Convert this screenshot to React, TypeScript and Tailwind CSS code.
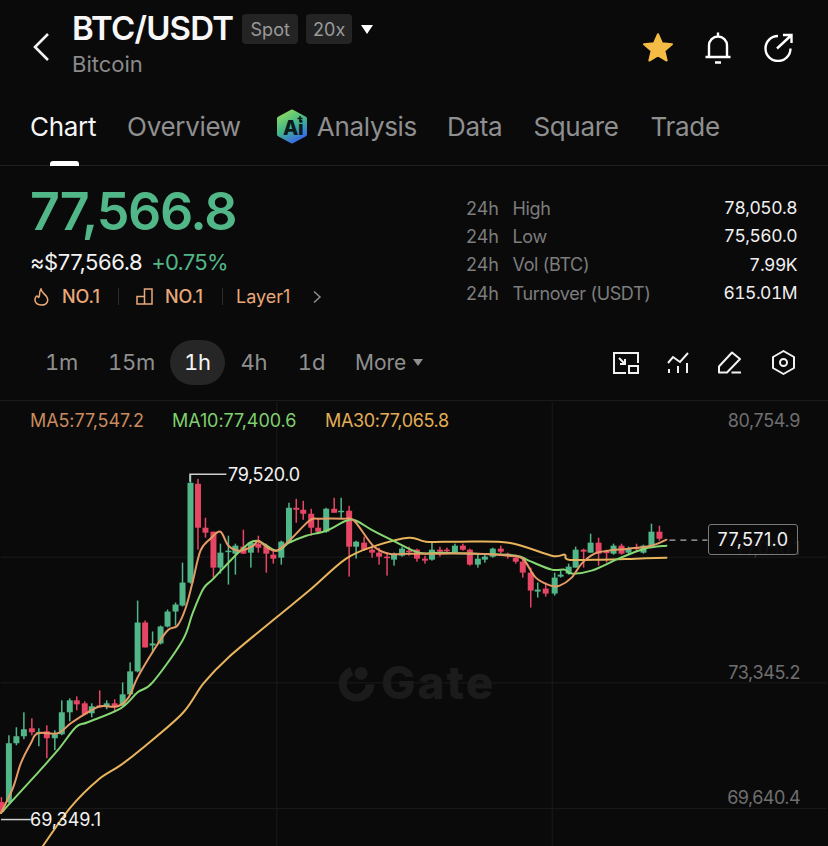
import type { ReactNode } from "react";

const GREEN = "#52b788";
const RED = "#e64563";

// [x, high, bodyTop, bodyBottom, low, isUp]
const CANDLES: [number, number, number, number, number, boolean][] = [
  [0.5, 797, 802, 812, 812, false],
  [8, 735, 743, 802, 803, true],
  [15.5, 727, 736, 743, 745, true],
  [23, 712, 729, 736, 739, true],
  [31, 718, 728, 732, 735, false],
  [38, 728, 732, 733.5, 746, true],
  [46, 725, 731, 738, 758, false],
  [54, 730, 734, 738, 750, true],
  [61, 700, 712, 734, 735, true],
  [69, 698, 700, 712, 721, true],
  [76, 696, 700, 704, 710, false],
  [84, 701, 703, 714, 715, false],
  [91, 703, 706, 713, 717, true],
  [99, 690, 705, 707, 707, false],
  [106, 700, 703, 706, 709, true],
  [114, 699, 703, 707, 712, false],
  [122, 682, 694, 705, 706, true],
  [129.5, 662, 671, 694, 695, true],
  [137, 600, 622, 671, 672, true],
  [144.5, 620, 622, 647, 647, false],
  [152, 631, 643, 645, 652, true],
  [160, 625, 626, 643, 644, true],
  [167, 609, 611, 626, 627, true],
  [175, 602, 604, 611, 625, true],
  [182, 562, 582, 605, 606, true],
  [190, 474, 482, 582, 583, true],
  [197.5, 478, 483, 527, 549, false],
  [205, 517, 527, 532, 537, false],
  [213, 531, 531, 567, 578, false],
  [220, 543, 552, 567, 573, true],
  [228, 535, 550, 551.5, 584, true],
  [235, 543, 545, 553, 574, true],
  [243, 529, 546, 553, 553, false],
  [250.5, 541, 542, 552, 567, true],
  [258, 535, 543, 547, 552, false],
  [266, 543, 546, 553, 572, false],
  [273, 550, 554, 558, 563, false],
  [281, 540, 541, 557, 564, true],
  [288.7, 502, 507, 542, 542, true],
  [296, 498, 507, 509, 522, false],
  [303, 500, 509, 513, 519, false],
  [311, 508, 513, 527, 535, false],
  [318, 517, 527, 531, 532, false],
  [326, 507, 508, 531, 532, true],
  [334, 497, 508, 512, 512, false],
  [341, 497, 510, 511, 518, true],
  [349, 505, 510, 546, 576, false],
  [356, 540, 541, 546, 558, true],
  [364, 536, 542, 549, 550, false],
  [372, 545, 549, 552, 557, false],
  [379, 547, 552, 556, 564, false],
  [387, 553, 556, 557.5, 575, false],
  [394, 552, 553, 559, 565, true],
  [402, 546, 548, 555, 556, true],
  [409, 546, 550, 551.5, 555, false],
  [417, 548, 549, 558, 561, false],
  [425, 555, 558, 560, 563, false],
  [432, 541, 549, 559, 560, true],
  [440, 546, 549, 551, 556, false],
  [447, 547, 549, 550.5, 553, false],
  [455, 543, 545, 552, 553, true],
  [463, 543, 545, 549, 550, false],
  [470, 548, 549, 564, 565, false],
  [478, 553, 558, 564, 567, true],
  [485, 554, 556, 559, 562, true],
  [493, 547, 548, 556, 557, true],
  [501, 545, 548, 551, 553, false],
  [508, 552, 553, 555, 558, false],
  [516, 554, 557, 561, 563, false],
  [523, 558, 561, 572, 577, false],
  [531, 567, 572, 590, 607, false],
  [538, 582, 589, 591, 597, true],
  [546, 582, 588, 593, 596, false],
  [555, 572, 577, 593, 595, true],
  [561, 570, 574, 576, 577, true],
  [569, 563, 566, 573, 574, true],
  [576, 546, 549, 567, 567, true],
  [584, 548, 549, 551, 567, false],
  [591, 533, 542, 552, 552, true],
  [599, 537, 542, 553, 565, false],
  [607, 549, 551, 552.5, 562, false],
  [614, 543, 545, 553, 554, true],
  [622, 543, 545, 553, 554, false],
  [629, 546, 548, 552, 554, true],
  [637, 543, 547, 548.5, 551, false],
  [644, 544, 545, 552, 553, true],
  [652, 523, 531, 545, 546, true],
  [660, 525, 531, 538, 540, false],
];

const MA5: number[][] = [
  [0, 813], [12, 788], [20, 763], [30, 743], [37, 733], [57, 733], [70, 723], [87, 712], [100, 706],
  [117, 706], [128, 697], [137, 677], [153, 650], [167, 630], [177, 625], [185, 608], [192, 582],
  [200, 550], [210, 538], [220, 531], [228, 545], [240, 550], [253, 545], [258, 540], [267, 547],
  [276, 550], [288, 541], [309, 520], [319, 518], [343, 518], [354, 520], [373, 545], [389, 553],
  [409, 553], [442, 553], [476, 553], [509, 555], [523, 558], [536, 577], [551, 585], [560, 585],
  [572, 577], [582, 563], [595, 553], [609, 550], [629, 548], [652, 545], [667, 539],
];
const MA10: number[][] = [
  [0, 813], [33, 777], [57, 750], [75, 727], [87, 722], [120, 708], [137, 692], [152, 682], [182, 640],
  [192, 613], [203, 588], [213, 578], [240, 550], [256, 540], [276, 550], [289, 542], [306, 535],
  [326, 530], [346, 520], [356, 520], [373, 530], [393, 540], [419, 552], [443, 552], [476, 553],
  [516, 555], [529, 560], [552, 569], [565, 569], [572, 573], [592, 570], [619, 558], [645, 548], [667, 545],
];
const MA30: number[][] = [
  [42, 846], [70, 807], [97, 780], [120, 765], [143, 747], [182, 713], [203, 683], [228, 657], [276, 617],
  [309, 590], [346, 558], [376, 545], [409, 537], [426, 541], [459, 541], [509, 542], [552, 555],
  [565, 554], [569, 559], [602, 559], [636, 558], [667, 557],
];

// catmull-rom through the points so the averages don't look faceted
function smooth(pts: number[][]) {
  let d = `M${pts[0][0]} ${pts[0][1]}`;
  for (let i = 0; i < pts.length - 1; i++) {
    const p0 = pts[Math.max(i - 1, 0)];
    const p1 = pts[i];
    const p2 = pts[i + 1];
    const p3 = pts[Math.min(i + 2, pts.length - 1)];
    const c1x = p1[0] + (p2[0] - p0[0]) / 6;
    const c1y = p1[1] + (p2[1] - p0[1]) / 6;
    const c2x = p2[0] - (p3[0] - p1[0]) / 6;
    const c2y = p2[1] - (p3[1] - p1[1]) / 6;
    d += `C${c1x} ${c1y} ${c2x} ${c2y} ${p2[0]} ${p2[1]}`;
  }
  return d;
}

function Candles() {
  return (
    <>
      {CANDLES.map(([x, high, top, bottom, low, up]) => {
        const color = up ? GREEN : RED;
        return (
          <g key={x} fill={color}>
            <rect x={x - 0.75} y={high} width={1.5} height={low - high} />
            <rect x={x - 3} y={top} width={6} height={Math.max(bottom - top, 1.5)} />
          </g>
        );
      })}
    </>
  );
}

function Chart() {
  return (
    <svg viewBox="0 400 828 446" className="absolute inset-0 h-full w-full">
      <path d="M0 556.500H828M0 682.500H828M0 808.500H828M276.500 401V846M552.500 401V846" stroke="#1b1b1c" strokeWidth="1" />
      <g fill="#1b1b1c">
        <path d="M350 666.500A18 18 0 1 0 374.500 684H365.500A9.500 9.500 0 1 1 353 675Z" />
        <circle cx="361" cy="673" r="6.500" />
        <text x="381" y="699" fontSize="46" fontWeight="800" letterSpacing="2">
          Gate
        </text>
      </g>
      <Candles />
      <g fill="none" strokeWidth="2" strokeLinejoin="round" strokeLinecap="round">
        <path d={smooth(MA30)} stroke="#e8b45c" />
        <path d={smooth(MA10)} stroke="#86d873" />
        <path d={smooth(MA5)} stroke="#e49c66" />
      </g>
      <path d="M189.500 481V473.500H226" fill="none" stroke="#cfcfcf" strokeWidth="1.500" />
      <path d="M0 819.500H30" stroke="#cfcfcf" strokeWidth="1.500" />
      <path d="M670 539.500H708" stroke="#b0b0b0" strokeWidth="1.200" strokeDasharray="6 5" />
    </svg>
  );
}

function Tab({ children, active }: { children: ReactNode; active?: boolean }) {
  return <span className={active ? "text-[#f5f5f5]" : "text-[#8f8f8f]"}>{children}</span>;
}

function AiIcon() {
  return (
    <svg width="32" height="35" viewBox="0 0 32 35" className="mr-[9px]">
      <defs>
        <linearGradient id="ai" x1="0.1" y1="0" x2="0.6" y2="1">
          <stop offset="0" stopColor="#8fdc5e" />
          <stop offset="0.55" stopColor="#3fb58d" />
          <stop offset="1" stopColor="#3a6fe0" />
        </linearGradient>
      </defs>
      <path
        d="M16 2.500L29 9.500V25.500L16 32.500L3 25.500V9.500Z"
        fill="url(#ai)"
        stroke="url(#ai)"
        strokeWidth="4"
        strokeLinejoin="round"
      />
      <text x="7" y="26" fontSize="20" fontWeight="800" fill="#0d1a1c">
        Ai
      </text>
      <path d="M24 7V12M21.500 9.500H26.500" stroke="#0d1a1c" strokeWidth="1.500" />
    </svg>
  );
}

const STATS = [
  ["High", "78,050.8"],
  ["Low", "75,560.0"],
  ["Vol (BTC)", "7.99K"],
  ["Turnover (USDT)", "615.01M"],
];

const FRAMES = [
  { label: "1m", box: "w-[63px] text-[#8f8f8f]" },
  { label: "15m", box: "w-[77px] text-[#8f8f8f]" },
  { label: "1h", box: "w-[55px] rounded-full bg-[#262627] text-[#f5f5f5]" },
  { label: "4h", box: "w-[58px] text-[#8f8f8f]" },
  { label: "1d", box: "w-[57px] text-[#8f8f8f]" },
];

export default function App() {
  return (
    <div className="flex h-[846px] w-[828px] flex-col overflow-hidden bg-[#0a0a0b] font-['Inter',sans-serif] text-white">
      {/* header */}
      <div className="flex h-[88px] shrink-0">
        <svg width="18" height="30" viewBox="0 0 18 30" className="ml-[32px] mt-[32px]" fill="none">
          <path d="M16 2L3 15L16 28" stroke="#f2f2f2" strokeWidth="2.600" />
        </svg>
        <div className="ml-[22px] pt-[10px]">
          <div className="flex h-[38px] items-center">
            <span className="text-[33px] font-semibold tracking-[-0.025em] text-[#f7f7f7]">BTC/USDT</span>
            <span className="ml-[9px] flex h-[30px] w-[56px] items-center justify-center rounded-[4px] bg-[#242425] text-[18px] text-[#9a9a9a]">
              Spot
            </span>
            <span className="ml-[8px] flex h-[30px] w-[46px] items-center justify-center rounded-[4px] bg-[#242425] text-[18px] text-[#9a9a9a]">
              20x
            </span>
            <span className="ml-[9px] h-0 w-0 border-x-[6.500px] border-t-[9px] border-x-transparent border-t-white" />
          </div>
          <div className="mt-[3px] text-[22px] leading-[26px] text-[#8a8a8a]">Bitcoin</div>
        </div>
        <div className="ml-auto mr-[35px] mt-[31px] flex h-[33px] items-center">
          <svg width="32" height="31" viewBox="0 0 24 23">
            <path
              d="M12 1.500L15 8.300L22.500 9L16.800 13.900L18.500 21.300L12 17.400L5.500 21.300L7.200 13.900L1.500 9L9 8.300Z"
              fill="#f4bc44"
              stroke="#f4bc44"
              strokeWidth="1.500"
              strokeLinejoin="round"
            />
          </svg>
          <svg width="26" height="32" viewBox="0 0 26 32" fill="none" stroke="#fff" strokeWidth="2.400" className="ml-[31px]">
            <path d="M13 0.500V4M4 25V13.500a9 9 0 0 1 18 0V25M0.500 25H25.500M10 30.500H16" />
          </svg>
          <svg width="29" height="29" viewBox="0 0 29 29" fill="none" stroke="#fff" strokeWidth="2.400" className="ml-[33px]">
            <path d="M14 3A12.500 12.500 0 1 0 26.500 15.500M13 15.500L27 2.500M19 2H27.500V10" />
          </svg>
        </div>
      </div>

      {/* tabs */}
      <div className="relative flex h-[78px] shrink-0 items-center border-b border-[#202021] pb-[1px] pl-[30px] text-[26px] tracking-[-0.012em]">
        <Tab active>Chart</Tab>
        <span className="ml-[31px]">
          <Tab>Overview</Tab>
        </span>
        <span className="ml-[35px]">
          <AiIcon />
        </span>
        <Tab>Analysis</Tab>
        <span className="ml-[30px]">
          <Tab>Data</Tab>
        </span>
        <span className="ml-[31px]">
          <Tab>Square</Tab>
        </span>
        <span className="ml-[32px]">
          <Tab>Trade</Tab>
        </span>
        <span className="absolute bottom-[-1px] left-[50px] h-[5px] w-[29px] rounded-t-[3px] bg-white" />
      </div>

      {/* price + 24h stats */}
      <div className="flex h-[174px] shrink-0 justify-between pl-[30px] pr-[31px]">
        <div>
          <div className="mt-[15px] text-[52px] font-semibold leading-[62px] tracking-[-0.025em] text-[#52b788]">
            77,566.8
          </div>
          <div className="mt-[4px] flex h-[30px] items-center text-[22px] tracking-[-0.02em]">
            <span className="text-[#f2f2f2]">≈$77,566.8</span>
            <span className="ml-[9px] tracking-[-0.035em] text-[#52b788]">+0.75%</span>
          </div>
          <div className="mt-[3px] flex h-[33px] items-center text-[18px] font-medium text-[#e9a878]">
            <svg width="15" height="18" viewBox="0 0 15 18" fill="none" stroke="#e9a878" strokeWidth="1.500" className="ml-[4px]">
              <path d="M7 1C7.500 4 10 5.500 12.500 8.500C15 12 13.500 17 7.500 17C2 17 0 13 1.500 9.500C2.500 7.500 3.500 7.500 4 9C4.500 10 5.500 9 5.500 6.500C5.500 4.500 6 2.500 7 1Z" />
            </svg>
            <span className="ml-[13px] w-[39px]">NO.1</span>
            <span className="ml-[17px] h-[17px] w-px bg-[#2c2c2c]" />
            <svg width="17" height="17" viewBox="0 0 17 17" fill="none" stroke="#e9a878" strokeWidth="1.500" className="ml-[17px]">
              <path d="M1 16V8.500H8.500V1H16V16ZM8.500 8.500V16" />
            </svg>
            <span className="ml-[12px] w-[39px]">NO.1</span>
            <span className="ml-[18px] h-[17px] w-px bg-[#2c2c2c]" />
            <span className="ml-[13px] w-[54px] font-normal">Layer1</span>
            <svg width="10" height="14" viewBox="0 0 10 14" fill="none" stroke="#8f8f8f" strokeWidth="1.500" className="ml-[22px]">
              <path d="M2 1.500L8 7L2 12.500" />
            </svg>
          </div>
        </div>
        <div className="mt-[28px] w-[331px] text-[18px]">
          {STATS.map(([label, value]) => (
            <div key={label} className="flex h-[28.300px] items-center">
              <span className="w-[46.500px] text-[#7d7d7d]">24h</span>
              <span className="tracking-[-0.02em] text-[#7d7d7d]">{label}</span>
              <span className="ml-auto text-[17.500px] tracking-[-0.03em] tabular-nums text-[#f0f0f0]">{value}</span>
            </div>
          ))}
        </div>
      </div>

      {/* timeframes + tools */}
      <div className="flex h-[45px] shrink-0 items-center pl-[30px] pr-[33px] text-[21px] text-[#8f8f8f]">
        {FRAMES.map((f) => (
          <span key={f.label} className={`flex h-[45px] items-center justify-center text-[22px] tracking-[-0.01em] tabular-nums ${f.box}`}>
            {f.label}
          </span>
        ))}
        <span className="ml-[15px]">More</span>
        <span className="ml-[7px] h-0 w-0 border-x-[5.500px] border-t-[7px] border-x-transparent border-t-[#8f8f8f]" />
        <div className="ml-auto flex items-center">
          <svg width="26" height="22" viewBox="0 0 26 22" fill="none" stroke="#f2f2f2" strokeWidth="2">
            <path d="M13 21H1V1H25V11M6 6L12 12M12 7V12H7" />
            <rect x="16" y="14" width="9" height="7" />
          </svg>
          <svg width="22" height="22" viewBox="0 0 22 22" fill="none" stroke="#f2f2f2" strokeWidth="2" className="ml-[28px]">
            <path d="M1 11L6 5L13 10L21 1M2 17V21M11 14V21M20 11V21" />
          </svg>
          <svg width="24" height="23" viewBox="0 0 24 23" fill="none" stroke="#f2f2f2" strokeWidth="2" strokeLinejoin="round" className="ml-[29px]">
            <path d="M1 21.500V15.500L14 1.500L22 8L9 21.500ZM13.500 21.500H23" />
          </svg>
          <svg width="23" height="25" viewBox="0 0 23 25" fill="none" stroke="#f2f2f2" strokeWidth="2" strokeLinejoin="round" className="ml-[30px]">
            <path d="M11.500 1L22 7V18L11.500 24L1 18V7Z" />
            <circle cx="11.500" cy="12.500" r="3.500" />
          </svg>
        </div>
      </div>

      {/* chart */}
      <div className="relative mt-[15px] flex-1 border-t border-[#1b1b1c]">
        <Chart />
        <div className="absolute left-[30px] top-[9px] flex text-[18px] leading-[22px]">
          <span className="w-[142px] tracking-[-0.005em] text-[#c98b5e]">MA5:77,547.2</span>
          <span className="w-[153px] tracking-[-0.005em] text-[#7fd06e]">MA10:77,400.6</span>
          <span className="tracking-[-0.02em] text-[#e3ad58]">MA30:77,065.8</span>
        </div>
        <span className="absolute right-[28px] top-[8px] text-[18px] leading-[24px] tracking-[-0.02em] text-[#6f6f6f]">80,754.9</span>
        <span className="absolute right-[28px] top-[136px] text-[18px] leading-[24px] tracking-[-0.02em] text-[#333]">77,050.1</span>
        <span className="absolute right-[28px] top-[260px] text-[18px] leading-[24px] tracking-[-0.02em] text-[#6f6f6f]">73,345.2</span>
        <span className="absolute right-[28px] top-[385px] text-[18px] leading-[24px] tracking-[-0.03em] text-[#6f6f6f]">69,640.4</span>
        <span className="absolute left-[228px] top-[62px] text-[18px] leading-[24px] tracking-[-0.02em] text-[#f2f2f2]">79,520.0</span>
        <span className="absolute left-[30px] top-[407px] text-[18px] leading-[24px] text-[#f2f2f2]">69,349.1</span>
        <span className="absolute left-[708px] top-[123px] flex h-[31px] w-[90px] items-center justify-center rounded-[3px] border border-[#7a7a7a] bg-[#0a0a0b]/80 text-[18px] tracking-[0.02em] text-[#f2f2f2]">
          77,571.0
        </span>
      </div>
    </div>
  );
}
